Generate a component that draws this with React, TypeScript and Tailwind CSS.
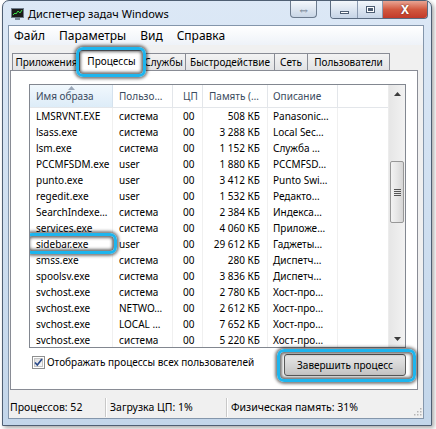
import React from 'react';

type Proc = { name: string; user: string; mem: string; desc: string };

const PROCS: Proc[] = [
  { name: 'LMSRVNT.EXE', user: 'система', mem: '508 КБ', desc: 'Panasonic…' },
  { name: 'lsass.exe', user: 'система', mem: '3 288 КБ', desc: 'Local Sec…' },
  { name: 'lsm.exe', user: 'система', mem: '1 152 КБ', desc: 'Служба …' },
  { name: 'PCCMFSDM.exe', user: 'user', mem: '1 880 КБ', desc: 'PCCMFSD…' },
  { name: 'punto.exe', user: 'user', mem: '3 412 КБ', desc: 'Punto Swi…' },
  { name: 'regedit.exe', user: 'user', mem: '1 532 КБ', desc: 'Редакто…' },
  { name: 'SearchIndexe…', user: 'система', mem: '2 384 КБ', desc: 'Индекса…' },
  { name: 'services.exe', user: 'система', mem: '4 060 КБ', desc: 'Приложе…' },
  { name: 'sidebar.exe', user: 'user', mem: '29 612 КБ', desc: 'Гаджеты…' },
  { name: 'smss.exe', user: 'система', mem: '280 КБ', desc: 'Диспетч…' },
  { name: 'spoolsv.exe', user: 'система', mem: '3 836 КБ', desc: 'Диспетч…' },
  { name: 'svchost.exe', user: 'система', mem: '2 780 КБ', desc: 'Хост-про…' },
  { name: 'svchost.exe', user: 'NETWO…', mem: '2 612 КБ', desc: 'Хост-про…' },
  { name: 'svchost.exe', user: 'LOCAL …', mem: '7 652 КБ', desc: 'Хост-про…' },
  { name: 'svchost.exe', user: 'система', mem: '5 220 КБ', desc: 'Хост-про…' },
];

const TABS = [
  { label: 'Приложения', w: 'w-[69px]' },
  { label: 'Процессы', w: 'w-[65px]', active: true },
  { label: 'Службы', w: 'w-[44px]' },
  { label: 'Быстродействие', w: 'w-[89px]' },
  { label: 'Сеть', w: 'w-[33px]' },
  { label: 'Пользователи', w: 'w-[82px]' },
];

// cyan callout frame drawn over a control
const Ring = ({ className }: { className: string }) => (
  <span
    className={`pointer-events-none absolute z-10 rounded-[7px] border-[3px] border-[#1db5ee] shadow-[0_0_3px_2px_rgba(0,0,0,0.5),inset_0_0_3px_2px_rgba(0,0,0,0.55)] ${className}`}
  />
);

const TaskIcon = () => (
  <svg width="13" height="12" viewBox="0 0 13 12">
    <rect x="0.5" y="0.5" width="12" height="9" fill="#1b1b1b" stroke="#6d7b8a" />
    <polyline points="2,7 4,5 5,6 7,3 9,5 11,2" fill="none" stroke="#3be04a" strokeWidth="1" />
    <rect x="4" y="10" width="5" height="2" fill="#7a8898" />
  </svg>
);

const CheckBox = () => (
  <svg width="13" height="13" viewBox="0 0 13 13">
    <defs>
      <linearGradient id="cbg" x1="0" y1="0" x2="1" y2="1">
        <stop offset="0" stopColor="#dcdcdc" />
        <stop offset="1" stopColor="#fbfbfb" />
      </linearGradient>
    </defs>
    <rect x="0.5" y="0.5" width="12" height="12" fill="#fff" stroke="#8e8f8f" />
    <rect x="2.5" y="2.5" width="8" height="8" fill="url(#cbg)" stroke="#c4c4c4" />
    <path d="M3 6.5 L5.3 9 L10 3" fill="none" stroke="#2a4a8a" strokeWidth="1.7" />
  </svg>
);

export default function App() {
  return (
    <div className="w-[436px] h-[429px] bg-white overflow-hidden font-['Noto_Sans',sans-serif] text-[10px] text-black">
      {/* window frame */}
      <div className="ml-[2px] w-[430px] h-[426px] rounded-t-[7px] border border-[#4f5f73] bg-gradient-to-b from-[#dce8f6] via-[#cfdff0] to-[#c3d6ea] shadow-[2px_2px_4px_rgba(0,0,0,0.35)] flex flex-col">
        {/* title bar */}
        <div className="h-[24px] flex items-start shrink-0">
          <div className="flex items-center h-[25px] pl-[8px] gap-[4px]">
            <TaskIcon />
            <span className="text-[11px] text-black leading-none">Диспетчер задач Windows</span>
          </div>
          <div className="ml-auto flex items-start pr-[3px]">
            <div className="w-[27px] h-[17px] mr-[13px] rounded-b-[4px] border border-t-0 border-[#6c7b8e] bg-gradient-to-b from-[#f4f8fc] to-[#c9d6e6] flex items-center justify-center text-[#5d6c7e] text-[13px] leading-none">
              ⇔
            </div>
            <div className="flex h-[18px] rounded-b-[4px] border border-t-0 border-[#5b6b80] overflow-hidden">
              <div className="w-[27px] bg-gradient-to-b from-[#f3f7fb] to-[#c6d4e6] border-r border-[#8b9ab0] flex items-center justify-center">
                <span className="block w-[9px] h-[3px] bg-white border border-[#4d5d72] mt-[5px]" />
              </div>
              <div className="w-[25px] bg-gradient-to-b from-[#f3f7fb] to-[#c6d4e6] border-r border-[#8b9ab0] flex items-center justify-center">
                <span className="block w-[9px] h-[7px] border border-[#4d5d72] bg-white">
                  <span className="block w-[5px] h-[3px] m-[1px] bg-[#4d5d72] border-t border-[#4d5d72]" />
                </span>
              </div>
              <div className="w-[44px] bg-gradient-to-b from-[#e8a493] via-[#d2583f] to-[#c2392a] flex items-center justify-center text-white font-bold text-[12px] leading-none [text-shadow:0_0_2px_#5a1a10]">
                X
              </div>
            </div>
          </div>
        </div>

        {/* client area */}
        <div className="ml-[5px] mr-[7px] flex-1 border border-[#8496ab] bg-[#f0f0f0] flex flex-col">
          {/* menu */}
          <div className="h-[19px] flex items-center gap-[14px] pl-[5px] bg-gradient-to-b from-white to-[#eef2f8] text-[12px]">
            <span>Файл</span>
            <span>Параметры</span>
            <span>Вид</span>
            <span>Справка</span>
          </div>

          {/* tabs */}
          <div className="mt-[5px] h-[21px] flex items-end pl-[3px] relative z-[1]">
            {TABS.map((t) =>
              t.active ? (
                <div
                  key={t.label}
                  className={`${t.w} relative -mx-[2px] h-[21px] border border-b-0 border-[#898c95] bg-white flex items-center justify-center z-[2]`}
                >
                  {t.label}
                  <Ring className="-left-[4px] -right-[3px] -top-[4px] -bottom-[6px]" />
                </div>
              ) : (
                <div
                  key={t.label}
                  className={`${t.w} h-[18px] border border-[#898c95] border-l-0 first:border-l bg-gradient-to-b from-[#f3f3f3] to-[#e2e3e5] flex items-center justify-center`}
                >
                  {t.label}
                </div>
              )
            )}
          </div>

          {/* tab page */}
          <div className="ml-[1px] mr-[5px] -mt-px h-[320px] border border-[#898c95] bg-white flex flex-col pt-[13px] pl-[18px] pr-[11px]">
            {/* process list */}
            <div className="h-[264px] border border-[#828790] flex overflow-hidden">
              <div className="flex-1 flex flex-col overflow-hidden">
                <div className="h-[23px] shrink-0 flex border-b border-[#e3e6ea] text-[#3b4b60]">
                  <div className="w-[83px] relative bg-gradient-to-b from-[#f1f8fd] to-[#ddecf8] border-r border-[#d5e2ee] pl-[6px] flex items-center">
                    <svg className="absolute top-[1px] left-[38px]" width="7" height="4" viewBox="0 0 7 4">
                      <path d="M0 4 L3.5 0 L7 4 Z" fill="#9aa7b8" />
                    </svg>
                    Имя образа
                  </div>
                  <div className="w-[60px] border-r border-[#e3e6ea] pl-[6px] flex items-center">Пользо…</div>
                  <div className="w-[30px] border-r border-[#e3e6ea] pl-[10px] flex items-center">ЦП</div>
                  <div className="w-[65px] border-r border-[#e3e6ea] pl-[6px] flex items-center">Память (…</div>
                  <div className="w-[70px] border-r border-[#e3e6ea] pl-[5px] flex items-center">Описание</div>
                  <div className="flex-1" />
                </div>
                {PROCS.map((p, i) => (
                  <div key={i} className="h-[16px] shrink-0 flex leading-[16px]">
                    <div className="w-[83px] relative border-r border-[#f0f0f0] pl-[6px] whitespace-nowrap">
                      {p.name}
                      {p.name === 'sidebar.exe' && (
                        <Ring className="-left-[5px] -right-[5px] -top-[3px] -bottom-[2px]" />
                      )}
                    </div>
                    <div className="w-[60px] border-r border-[#f0f0f0] pl-[6px] whitespace-nowrap">{p.user}</div>
                    <div className="w-[30px] border-r border-[#f0f0f0] pl-[10px]">00</div>
                    <div className="w-[65px] border-r border-[#f0f0f0] pr-[7px] text-right whitespace-nowrap">{p.mem}</div>
                    <div className="w-[70px] border-r border-[#f0f0f0] pl-[5px] whitespace-nowrap">{p.desc}</div>
                    <div className="flex-1" />
                  </div>
                ))}
              </div>

              {/* scrollbar */}
              <div className="w-[17px] shrink-0 bg-gradient-to-r from-[#e6e6e6] to-[#f2f2f2] flex flex-col border-l border-[#ececec]">
                <div className="h-[17px] flex items-center justify-center">
                  <svg width="7" height="4" viewBox="0 0 7 4"><path d="M0 4 L3.5 0 L7 4 Z" fill="#3c3c3c" /></svg>
                </div>
                <div className="h-[59px]" />
                <div className="h-[62px] mx-[1px] rounded-[2px] border border-[#979797] bg-gradient-to-r from-[#f3f3f3] via-[#e6e6e6] to-[#d6d6d6] flex items-center justify-center">
                  <div className="flex flex-col gap-[1px]">
                    <span className="block w-[7px] h-px bg-[#555]" />
                    <span className="block w-[7px] h-px bg-[#555]" />
                    <span className="block w-[7px] h-px bg-[#555]" />
                    <span className="block w-[7px] h-px bg-[#555]" />
                  </div>
                </div>
                <div className="flex-1" />
                <div className="h-[17px] flex items-center justify-center">
                  <svg width="7" height="4" viewBox="0 0 7 4"><path d="M0 0 L3.5 4 L7 0 Z" fill="#3c3c3c" /></svg>
                </div>
              </div>
            </div>

            {/* bottom controls */}
            <div className="mt-[6px] h-[22px] flex items-center">
              <div className="ml-[3px] flex items-center gap-[2px] -mt-[5px]">
                <CheckBox />
                <span>Отображать процессы всех пользователей</span>
              </div>
              <div className="ml-auto relative w-[122px] h-[22px] rounded-[3px] border border-[#5c5c5c] bg-gradient-to-b from-[#e6e6e6] via-[#d6d6d6] to-[#c2c2c2] flex items-center justify-center">
                Завершить процесс
                <Ring className="-left-[8px] -right-[11px] -top-[6px] -bottom-[7px]" />
              </div>
            </div>
          </div>

          {/* status bar */}
          <div className="mt-[2px] flex-1 flex items-end pb-[1px] text-[10.5px]">
            <div className="w-[96px] h-[19px] flex items-center pl-[1px]">Процессов: 52</div>
            <span className="w-[2px] h-[19px] border-l border-[#c8c8c8] border-r border-r-white" />
            <div className="w-[119px] h-[19px] flex items-center pl-[3px]">Загрузка ЦП: 1%</div>
            <span className="w-[2px] h-[19px] border-l border-[#c8c8c8] border-r border-r-white" />
            <div className="flex-1 h-[19px] flex items-center pl-[3px]">Физическая память: 31%</div>
            <svg className="mb-[1px] mr-[1px]" width="10" height="10" viewBox="0 0 10 10">
              {[
                [8, 2],
                [5, 5],
                [8, 5],
                [2, 8],
                [5, 8],
                [8, 8],
              ].map(([x, y], i) => (
                <rect key={i} x={x} y={y} width="1.5" height="1.5" fill="#b5b5b5" />
              ))}
            </svg>
          </div>
        </div>
        <div className="h-[6px] shrink-0" />
      </div>
    </div>
  );
}
